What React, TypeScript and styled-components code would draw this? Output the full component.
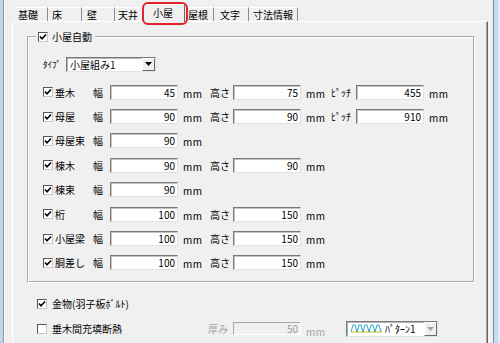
import React from "react";
import styled, { createGlobalStyle } from "styled-components";

const GlobalStyle = createGlobalStyle`
    html, body {
        margin: 0;
        padding: 0;
        background: #f0f0f0;
    }
    body {
        font-family: "Noto Sans CJK JP", "Noto Sans", sans-serif;
        font-size: 10px;
        color: #000;
    }
`;

interface TabInfo {
    label: string;
    width: number;
    pad: number;
    active?: boolean;
}

const tabs: TabInfo[] = [
    { label: "基礎", width: 34, pad: 4 },
    { label: "床", width: 34, pad: 4 },
    { label: "壁", width: 33, pad: 5 },
    { label: "天井", width: 28, pad: 3 },
    { label: "小屋", width: 42, pad: 9, active: true },
    { label: "屋根", width: 29, pad: 3 },
    { label: "文字", width: 35, pad: 6 },
    { label: "寸法情報", width: 49, pad: 4 },
];

interface MemberRow {
    name: string;
    width: number;
    height?: number;
    pitch?: number;
}

const members: MemberRow[] = [
    { name: "垂木", width: 45, height: 75, pitch: 455 },
    { name: "母屋", width: 90, height: 90, pitch: 910 },
    { name: "母屋束", width: 90 },
    { name: "棟木", width: 90, height: 90 },
    { name: "棟束", width: 90 },
    { name: "桁", width: 100, height: 150 },
    { name: "小屋梁", width: 100, height: 150 },
    { name: "胴差し", width: 100, height: 150 },
];

const CheckBox: React.FC<{ checked?: boolean }> = ({ checked }) => (
    <Box>
        {checked && (
            <svg width="8" height="8" viewBox="0 0 8 8">
                <polyline points="1,3.5 3,5.8 7,1.5" fill="none" stroke="#000" strokeWidth="1.6" />
            </svg>
        )}
    </Box>
);

const DropArrow: React.FC<{ disabled?: boolean }> = ({ disabled }) => (
    <DropButton>
        <svg width="7" height="4" viewBox="0 0 7 4">
            <polygon points="0,0 7,0 3.5,4" fill={disabled ? "#a0a0a0" : "#000"} />
        </svg>
    </DropButton>
);

const WaveIcon: React.FC = () => (
    <svg width="31" height="9" viewBox="0 0 31 9">
        <line x1="0" y1="8" x2="31" y2="8" stroke="#d6c93a" strokeWidth="1.2" />
        <polyline
            points="0,8 2,1 4,1 6,8 8,1 10,1 12,8 14,1 16,1 18,8 20,1 22,1 24,8 26,1 28,1 30,8"
            fill="none"
            stroke="#2aa7c9"
            strokeWidth="1"
        />
    </svg>
);

export default function App() {
    return (
        <>
            <GlobalStyle />
            <Window>
                <FrameLeft />
                <Main>
                    <TabStrip>
                        {tabs.map((t) => (
                            <Tab key={t.label} $active={t.active} $width={t.width} $pad={t.pad}>
                                {t.label}
                                {t.active && <Highlight />}
                            </Tab>
                        ))}
                    </TabStrip>
                    <Panel>
                        <GroupBox>
                            <Legend>
                                <CheckBox checked />
                                小屋自動
                            </Legend>
                            <TypeRow>
                                <TypeLabel>ﾀｲﾌﾟ</TypeLabel>
                                <Combo $width={90}>
                                    <ComboText>小屋組み1</ComboText>
                                    <DropArrow />
                                </Combo>
                            </TypeRow>
                            <Rows>
                                {members.map((m) => (
                                    <Row key={m.name}>
                                        <NameCell>
                                            <CheckBox checked />
                                            <span>{m.name}</span>
                                        </NameCell>
                                        <FieldLabel $width={17}>幅</FieldLabel>
                                        <NumInput readOnly value={m.width} />
                                        <Unit $width={27}>mm</Unit>
                                        {m.height !== undefined && (
                                            <>
                                                <FieldLabel $width={23}>高さ</FieldLabel>
                                                <NumInput readOnly value={m.height} />
                                                <Unit $width={25}>mm</Unit>
                                            </>
                                        )}
                                        {m.pitch !== undefined && (
                                            <>
                                                <FieldLabel $width={25}>ﾋﾟｯﾁ</FieldLabel>
                                                <NumInput readOnly value={m.pitch} />
                                                <Unit $width={25}>mm</Unit>
                                            </>
                                        )}
                                    </Row>
                                ))}
                            </Rows>
                        </GroupBox>
                        <Options>
                            <OptionRow>
                                <CheckLabel>
                                    <CheckBox checked />
                                    金物(羽子板ﾎﾞﾙﾄ)
                                </CheckLabel>
                            </OptionRow>
                            <OptionRow>
                                <CheckLabel $width={171}>
                                    <CheckBox />
                                    垂木間充填断熱
                                </CheckLabel>
                                <FieldLabel $width={25} $disabled>
                                    厚み
                                </FieldLabel>
                                <NumInput readOnly disabled value={50} $small />
                                <Unit $width={40} $disabled $low>
                                    mm
                                </Unit>
                                <Combo $width={92} $tall>
                                    <PatternIcon>
                                        <WaveIcon />
                                    </PatternIcon>
                                    <ComboText>ﾊﾟﾀｰﾝ1</ComboText>
                                    <DropArrow disabled />
                                </Combo>
                            </OptionRow>
                        </Options>
                    </Panel>
                </Main>
                <FrameRight />
            </Window>
        </>
    );
}

// --- window frame ---
const Window = styled.div`
    display: flex;
    width: 500px;
    height: 343px;
    overflow: hidden;
    background: #f0f0f0;
`;

const FrameLeft = styled.div`
    width: 5px;
    flex-shrink: 0;
    background: linear-gradient(
        to right,
        #c3d5e9 0 3px,
        #8c97a3 3px 4px,
        #fbfbfb 4px 5px
    );
`;

const FrameRight = styled.div`
    width: 7px;
    flex-shrink: 0;
    background: linear-gradient(
        to right,
        #7f8b97 0 1px,
        #c6daef 1px 5px,
        #e2ecf7 5px 7px
    );
`;

const Main = styled.div`
    flex: 1;
    display: flex;
    flex-direction: column;
    padding: 4px 5px 0 7px;
    min-width: 0;
`;

// --- tabs ---
const TabStrip = styled.div`
    display: flex;
    align-items: flex-end;
    height: 17px;
    padding-left: 2px;
`;

const Tab = styled.div<{ $active?: boolean; $width: number; $pad: number }>`
    position: relative;
    box-sizing: border-box;
    width: ${(p) => p.$width}px;
    height: ${(p) => (p.$active ? 18 : 14)}px;
    margin-bottom: ${(p) => (p.$active ? -1 : 0)}px;
    padding-left: ${(p) => p.$pad}px;
    line-height: ${(p) => (p.$active ? 15 : 13)}px;
    white-space: nowrap;
    background: #f0f0f0;
    z-index: ${(p) => (p.$active ? 1 : 0)};
    border-top: 1px solid #fff;
    border-left: ${(p) => (p.$active ? "1px solid #fff" : "none")};
    border-right: 1px solid ${(p) => (p.$active ? "#696969" : "#8a8a8a")};
`;

const Highlight = styled.span`
    position: absolute;
    left: -2px;
    top: -3px;
    right: -4px;
    bottom: -3px;
    border: 2px solid #e3232b;
    border-radius: 6px;
    pointer-events: none;
`;

const Panel = styled.div`
    flex: 1;
    border-top: 1px solid #fff;
    border-left: 1px solid #fff;
    border-right: 1px solid #696969;
    box-shadow: inset -1px 0 #a0a0a0;
    padding: 8px 12px 0 14px;
`;

// --- group box ---
const GroupBox = styled.fieldset`
    margin: 0;
    border: 2px groove #fff;
    padding: 0 0 6px 7px;
    min-inline-size: 0;
`;

const Legend = styled.legend`
    display: flex;
    align-items: center;
    gap: 4px;
    height: 14px;
    line-height: 14px;
    padding: 0 3px 0 2px;
`;

const Box = styled.span`
    box-sizing: border-box;
    display: inline-flex;
    align-items: center;
    justify-content: center;
    width: 10px;
    height: 10px;
    flex-shrink: 0;
    background: #fff;
    border: 1px solid;
    border-color: #555 #c8c8c8 #c8c8c8 #555;
`;

const TypeRow = styled.div`
    display: flex;
    align-items: center;
    height: 24px;
    margin-top: 8px;
    padding-left: 7px;
`;

const TypeLabel = styled.span`
    width: 23px;
    font-size: 9px;
`;

const Combo = styled.div<{ $width: number; $tall?: boolean }>`
    box-sizing: border-box;
    display: flex;
    align-items: center;
    width: ${(p) => p.$width}px;
    height: ${(p) => (p.$tall ? 16 : 15)}px;
    background: #fff;
    border: 1px solid;
    border-color: #7a7a7a #e4e4e4 #e4e4e4 #7a7a7a;
    box-shadow: inset 1px 1px #b4b4b4;
`;

const ComboText = styled.span`
    flex: 1;
    padding-left: 3px;
    white-space: nowrap;
    line-height: 13px;
`;

const PatternIcon = styled.span`
    display: flex;
    margin-left: 4px;
`;

const DropButton = styled.span`
    box-sizing: border-box;
    display: flex;
    align-items: center;
    justify-content: center;
    width: 13px;
    height: 100%;
    background: #f0f0f0;
    border: 1px solid;
    border-color: #fff #6a6a6a #6a6a6a #fff;
`;

// --- member rows ---
const Rows = styled.div`
    margin-top: 4px;
`;

const Row = styled.div`
    display: flex;
    align-items: center;
    height: 24.4px;
    padding-left: 7px;
`;

const NameCell = styled.div`
    display: flex;
    align-items: center;
    gap: 2px;
    width: 50px;
    white-space: nowrap;
`;

const FieldLabel = styled.span<{ $width: number; $disabled?: boolean }>`
    width: ${(p) => p.$width}px;
    white-space: nowrap;
    color: ${(p) => (p.$disabled ? "#a3a3a3" : "#000")};
`;

const NumInput = styled.input<{ $small?: boolean }>`
    box-sizing: border-box;
    width: 68px;
    height: ${(p) => (p.$small ? 13 : 15)}px;
    margin: 0;
    padding: 0 2px 0 0;
    text-align: right;
    font-family: "Noto Sans CJK JP", sans-serif;
    font-size: 10px;
    color: #000;
    background: #fff;
    border: 1px solid;
    border-color: #7a7a7a #e0e0e0 #e0e0e0 #7a7a7a;
    box-shadow: inset 1px 1px #c4c4c4;
    outline: none;

    &:disabled {
        color: #9c9c9c;
        background: #f0f0f0;
        border-color: #a8a8a8 #fff #fff #a8a8a8;
        box-shadow: none;
    }
`;

const Unit = styled.span<{ $width: number; $disabled?: boolean; $low?: boolean }>`
    width: ${(p) => p.$width}px;
    margin-left: 5px;
    padding-top: ${(p) => (p.$low ? 5 : 2)}px;
    letter-spacing: 0.5px;
    color: ${(p) => (p.$disabled ? "#a3a3a3" : "#000")};
`;

// --- options below group ---
const Options = styled.div`
    margin-top: 8px;
    padding-left: 10px;
`;

const OptionRow = styled.div`
    display: flex;
    align-items: center;
    height: 25px;
`;

const CheckLabel = styled.label<{ $width?: number }>`
    display: flex;
    align-items: center;
    gap: 5px;
    width: ${(p) => (p.$width ? `${p.$width}px` : "auto")};
    white-space: nowrap;
`;
